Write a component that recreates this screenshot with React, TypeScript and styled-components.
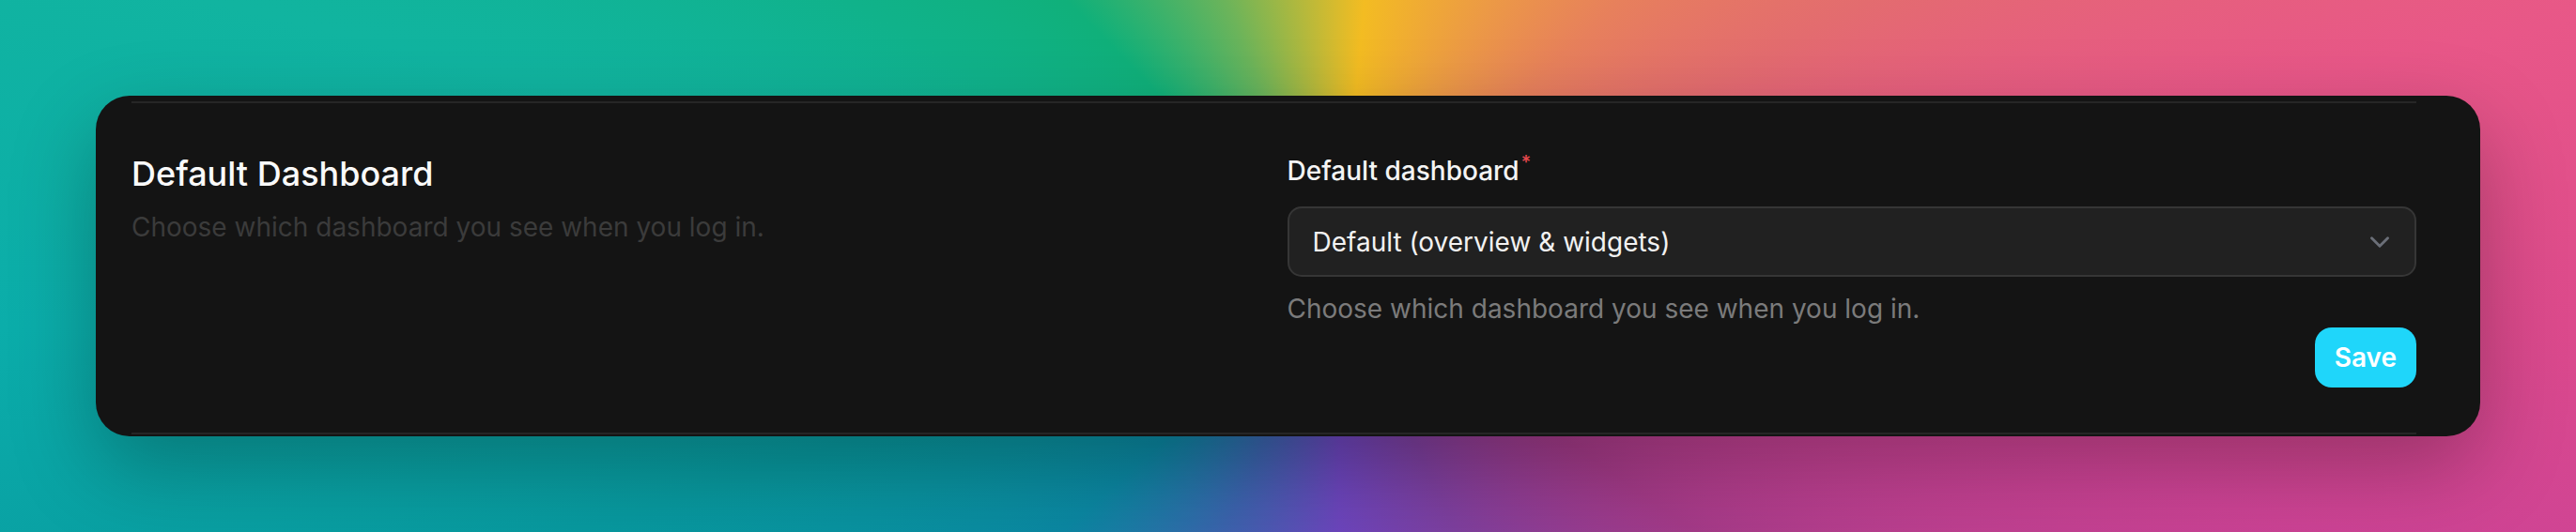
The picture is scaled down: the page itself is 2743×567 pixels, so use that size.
import React from 'react'
import styled, { createGlobalStyle } from 'styled-components'
import { ChevronDown } from 'lucide-react'

const GlobalStyle = createGlobalStyle`
  html, body {
    margin: 0;
    padding: 0;
  }
  body {
    font-family: Inter, 'Noto Sans', 'Liberation Sans', sans-serif;
    -webkit-font-smoothing: antialiased;
  }
  * {
    box-sizing: border-box;
  }
`

const Backdrop = styled.div`
  width: 100vw;
  height: 100vh;
  padding: 102px;
  display: flex;
  align-items: center;
  background: conic-gradient(
    from 0deg at 52% 53%,
    #dbbb2c 0deg,
    #f3bc22 5deg,
    #ec9a45 28deg,
    #e7805c 45deg,
    #e36c6f 62deg,
    #e85788 78deg,
    #dc4a8c 92deg,
    #cd4395 104deg,
    #a43a88 125deg,
    #7d3f9e 155deg,
    #6c45bc 180deg,
    #3b63ad 205deg,
    #0b87a2 228deg,
    #08999f 252deg,
    #0badaa 268deg,
    #11b4a0 284deg,
    #10b28a 300deg,
    #10b07a 316deg,
    #6cb45a 338deg,
    #dbbb2c 360deg
  );
`

const Card = styled.div`
  width: 100%;
  background: #141414;
  border-radius: 36px;
  padding: 6px 68px 2px 38px;
  box-shadow: 0 34px 90px rgba(0, 0, 0, 0.28);
`

const Section = styled.section`
  display: grid;
  grid-template-columns: 1fr 1fr;
  gap: 28px;
  padding: 51px 0 48px;
  border-top: 2px solid #262626;
  border-bottom: 2px solid #262626;
`

const Intro = styled.div`
  display: flex;
  flex-direction: column;
  gap: 11px;
`

const Title = styled.h2`
  margin: 0;
  font-size: 36px;
  line-height: 49px;
  font-weight: 500;
  color: #fafafa;
`

const Hint = styled.p<{ $bright?: boolean }>`
  margin: 0;
  font-size: 28px;
  line-height: ${p => (p.$bright ? 40 : 42)}px;
  color: ${p => (p.$bright ? '#7b7b7b' : '#3b3b3b')};
`

const Field = styled.div`
  display: flex;
  flex-direction: column;
`

const Label = styled.label`
  font-size: 28px;
  line-height: 42px;
  font-weight: 500;
  color: #f4f4f4;
  margin-bottom: 17px;
`

const Required = styled.span`
  color: #e5484d;
  font-size: 20px;
  line-height: 0;
  vertical-align: 12px;
  margin-left: 2px;
`

const Select = styled.div`
  height: 75px;
  display: flex;
  align-items: center;
  justify-content: space-between;
  padding: 0 20px 0 25px;
  background: #212121;
  border: 2px solid #363636;
  border-radius: 15px;
  color: #f2f2f2;
  font-size: 28px;
  margin-bottom: 14px;
`

const Actions = styled.div`
  display: flex;
  justify-content: flex-end;
`

const SaveButton = styled.button`
  height: 64px;
  padding: 0 21px;
  border: none;
  border-radius: 18px;
  background: #1fd6fa;
  color: #ffffff;
  font-family: inherit;
  font-size: 28px;
  font-weight: 600;
  cursor: pointer;
`

export default function App() {
  return (
    <>
      <GlobalStyle />
      <Backdrop>
        <Card>
          <Section>
            <Intro>
              <Title>Default Dashboard</Title>
              <Hint>Choose which dashboard you see when you log in.</Hint>
            </Intro>
            <Field>
              <Label>
                Default dashboard<Required>*</Required>
              </Label>
              <Select>
                <span>Default (overview &amp; widgets)</span>
                <ChevronDown size={34} strokeWidth={2} color="#6b6f78" />
              </Select>
              <Hint $bright>Choose which dashboard you see when you log in.</Hint>
              <Actions>
                <SaveButton>Save</SaveButton>
              </Actions>
            </Field>
          </Section>
        </Card>
      </Backdrop>
    </>
  )
}
